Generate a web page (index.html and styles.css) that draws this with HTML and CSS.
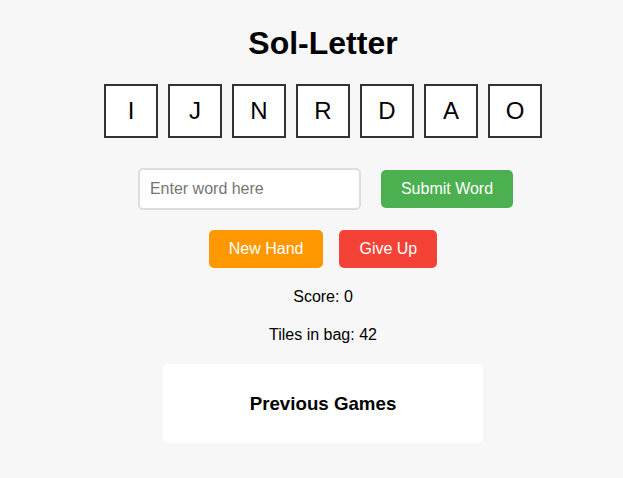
FILE: index.html
```html
<!DOCTYPE html>
<html lang="en">
<head>
<meta charset="utf-8">
<title>Sol-Letter</title>
<link rel="stylesheet" href="styles.css">
</head>
<body>
<main class="game">
  <h1 class="title">Sol-Letter</h1>
  <div class="hand">
    <div class="tile">I</div>
    <div class="tile">J</div>
    <div class="tile">N</div>
    <div class="tile">R</div>
    <div class="tile">D</div>
    <div class="tile">A</div>
    <div class="tile">O</div>
  </div>
  <div class="entry">
    <input class="word-input" type="text" placeholder="Enter word here">
    <button class="btn btn-submit">Submit Word</button>
  </div>
  <div class="actions">
    <button class="btn btn-new">New Hand</button>
    <button class="btn btn-giveup">Give Up</button>
  </div>
  <p class="stat">Score: 0</p>
  <p class="stat">Tiles in bag: 42</p>
  <section class="history">
    <h3 class="history-title">Previous Games</h3>
  </section>
</main>
</body>
</html>
```
FILE: styles.css
```css
* { box-sizing: border-box; }
html, body { margin: 0; padding: 0; }
body {
  background: #f7f7f7;
  font-family: "Liberation Sans", Arial, sans-serif;
  color: #000;
  padding-left: 23px;
}
.game {
  display: flex;
  flex-direction: column;
  align-items: center;
}
.title {
  margin: 25px 0 0;
  font-size: 32px;
  line-height: 37px;
  font-weight: bold;
}
.hand {
  display: flex;
  gap: 10px;
  margin-top: 22px;
}
.tile {
  width: 54px;
  height: 54px;
  border: 2px solid #333;
  background: #fff;
  display: flex;
  align-items: center;
  justify-content: center;
  font-size: 24px;
}
.entry {
  display: flex;
  align-items: center;
  gap: 20px;
  margin-top: 30px;
  margin-left: 5px;
}
.word-input {
  width: 223px;
  height: 42px;
  border: 2px solid #ddd;
  border-radius: 5px;
  padding: 0 10px;
  font-family: inherit;
  font-size: 16px;
  background: #fff;
  color: #000;
}
.word-input::placeholder { color: #757575; }
.btn {
  height: 38px;
  padding: 0 20px;
  border: none;
  border-radius: 5px;
  color: #fff;
  font-family: inherit;
  font-size: 16px;
  line-height: 18px;
}
.btn-submit { background: #4caf50; }
.btn-new { background: #ff9800; }
.btn-giveup { background: #f44336; }
.actions {
  display: flex;
  gap: 16px;
  margin-top: 20px;
}
.stat {
  margin: 20px 0 0;
  font-size: 16px;
  line-height: 18px;
}
.history {
  margin-top: 20px;
  width: 320px;
  background: #fff;
  border-radius: 5px;
  padding: 29px 0 28px;
  text-align: center;
}
.history-title {
  margin: 0;
  font-size: 18.72px;
  line-height: 22px;
  font-weight: bold;
}
```
